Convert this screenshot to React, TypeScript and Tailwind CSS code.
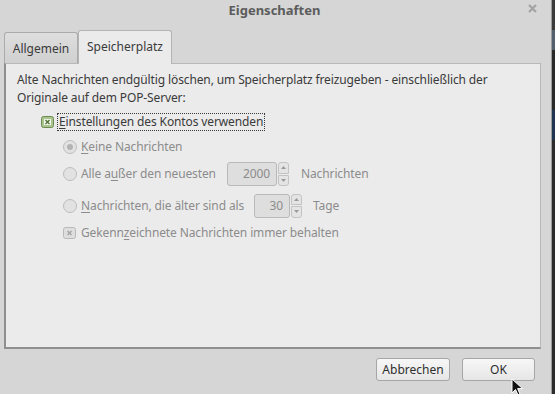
import React from 'react';

const font = { fontFamily: '"Noto Sans", "Open Sans", sans-serif' };

function Radio({ checked }: { checked?: boolean }) {
  return (
    <span className="w-[14px] h-[14px] rounded-full border border-[#bdbdbd] bg-[#e2e2e2] flex items-center justify-center shrink-0">
      {checked && <span className="w-[6px] h-[6px] rounded-full bg-[#b3b3b3]" />}
    </span>
  );
}

function Spin({ value, width }: { value: string; width: string }) {
  return (
    <div className="flex items-center gap-[1px]">
      <div className={`${width} h-[24px] rounded-[3px] border border-[#b9b9b9] bg-[#dedede] flex items-center justify-end pr-[6px] text-[#8c8c8c]`}>
        {value}
      </div>
      <div className="w-[11px] h-[24px] flex flex-col gap-[1px]">
        <div className="flex-1 rounded-t-[3px] border border-[#c3c3c3] bg-[#e4e4e4] flex items-center justify-center">
          <svg width="5" height="3" viewBox="0 0 5 3"><path d="M0 3 L2.5 0 L5 3Z" fill="#9a9a9a" /></svg>
        </div>
        <div className="flex-1 rounded-b-[3px] border border-[#c3c3c3] bg-[#e4e4e4] flex items-center justify-center">
          <svg width="5" height="3" viewBox="0 0 5 3"><path d="M0 0 L2.5 3 L5 0Z" fill="#9a9a9a" /></svg>
        </div>
      </div>
    </div>
  );
}

export default function App() {
  return (
    <div className="w-[555px] h-[394px] flex bg-[#2c2c2c] overflow-hidden text-[12px]" style={font}>
      <div className="w-[552px] h-full bg-[#d6d6d6] flex flex-col relative border-r border-[#9d9d9d]">
        {/* title bar */}
        <div className="h-[22px] relative flex items-center justify-center">
          <span className="font-bold text-[13px] text-[#5c5c5c] pr-[2px]">Eigenschaften</span>
          <svg className="absolute right-[14px] top-[4px]" width="9" height="9" viewBox="0 0 9 9">
            <path d="M1 1 L8 8 M8 1 L1 8" stroke="#a3a3a3" strokeWidth="2.2" />
          </svg>
        </div>

        <div className="pl-[4px] pt-[7px]">
          {/* tabs */}
          <div className="flex items-end h-[34px]">
            <div className="w-[74px] h-[31px] rounded-t-[3px] border border-b-0 border-[#ababab] bg-gradient-to-b from-[#dedede] to-[#d0d0d0] flex items-center justify-center text-[#3a3a3a] pt-[2px]">
              Allgemein
            </div>
            <div className="w-[94px] h-[34px] rounded-t-[3px] border border-b-0 border-[#b4b4b4] bg-[#ebebeb] flex items-center justify-center text-[#3a3a3a] -mb-[1px] relative z-10 pb-[2px]">
              Speicherplatz
            </div>
          </div>

          {/* panel */}
          <div className="w-[537px] h-[286px] bg-[#ebebeb] border border-t-[#b8b8b8] border-r-[#b8b8b8] border-l-2 border-b-2 border-l-[#8f8f8f] border-b-[#8f8f8f] pl-[11px] pt-[7px] text-[#3a3a3a] leading-[18px] tracking-[-0.12px]">
            <p>Alte Nachrichten endgültig löschen, um Speicherplatz freizugeben - einschließlich der</p>
            <p>Originale auf dem POP-Server:</p>

            <div className="flex items-center ml-[24px] mt-[6px] h-[18px]">
              <svg width="13" height="12" viewBox="0 0 13 12" className="shrink-0">
                <rect x="0.5" y="0.5" width="12" height="11" rx="2" fill="#a9c48c" stroke="#6c8a52" />
                <rect x="3" y="3" width="7" height="6" fill="#f4f7ef" />
                <path d="M4.5 4 L8.5 8 M8.5 4 L4.5 8" stroke="#4f7034" strokeWidth="1.4" />
              </svg>
              <span className="ml-[3px] px-[1px] border border-dotted border-[#3a3a3a] leading-[16px]">
                <span className="underline underline-offset-2">E</span>instellungen des Kontos verwenden
              </span>
            </div>

            <div className="ml-[46px] text-[#8c8c8c]">
              <div className="flex items-center h-[18px] mt-[7px] gap-[4px]">
                <Radio checked />
                <span><span className="underline underline-offset-2">K</span>eine Nachrichten</span>
              </div>
              <div className="flex items-center h-[24px] mt-[6px]">
                <Radio />
                <span className="ml-[4px] w-[146px]">Alle a<span className="underline underline-offset-2">u</span>ßer den neuesten</span>
                <Spin value="2000" width="w-[50px]" />
                <span className="ml-[12px]">Nachrichten</span>
              </div>
              <div className="flex items-center h-[25px] mt-[7px]">
                <Radio />
                <span className="ml-[4px] w-[173px]"><span className="underline underline-offset-2">N</span>achrichten, die älter sind als</span>
                <Spin value="30" width="w-[36px]" />
                <span className="ml-[11px]">Tage</span>
              </div>
              <div className="flex items-center h-[18px] mt-[6px] gap-[5px]">
                <svg width="13" height="12" viewBox="0 0 13 12" className="shrink-0">
                  <rect x="0.5" y="0.5" width="12" height="11" rx="2" fill="#dedede" stroke="#b8b8b8" />
                  <path d="M4.5 4 L8.5 8 M8.5 4 L4.5 8" stroke="#a4a4a4" strokeWidth="1.4" />
                </svg>
                <span>Gekenn<span className="underline underline-offset-2">z</span>eichnete Nachrichten immer behalten</span>
              </div>
            </div>
          </div>
        </div>

        {/* footer buttons */}
        <div className="flex justify-end gap-[12px] pr-[16px] pt-[9px]">
          <button className="w-[74px] h-[23px] rounded-[3px] border border-[#a6a6a6] bg-gradient-to-b from-[#f7f7f7] to-[#e6e6e6] text-[#2e2e2e]">
            Abbrechen
          </button>
          <button className="w-[73px] h-[23px] rounded-[3px] border border-[#a6a6a6] bg-gradient-to-b from-[#f7f7f7] to-[#e6e6e6] text-[#2e2e2e]">
            OK
          </button>
        </div>

        {/* mouse pointer */}
        <svg className="absolute left-[511px] top-[378px]" width="14" height="20" viewBox="0 0 14 20">
          <path d="M1 1 L1 15 L4.5 11.5 L7 17 L9 16 L6.6 10.6 L11.5 10.6 Z" fill="#111" stroke="#fff" strokeWidth="1" />
        </svg>
      </div>
      <div className="flex-1 flex flex-col">
        <div className="h-[30px] bg-[#3b3b3b]" />
        <div className="h-[20px] bg-[#55606e]" />
        <div className="h-[60px] bg-[#2a2a2a]" />
        <div className="h-[30px] bg-[#1f3550]" />
        <div className="flex-1 bg-[#2c2c2c]" />
      </div>
    </div>
  );
}
